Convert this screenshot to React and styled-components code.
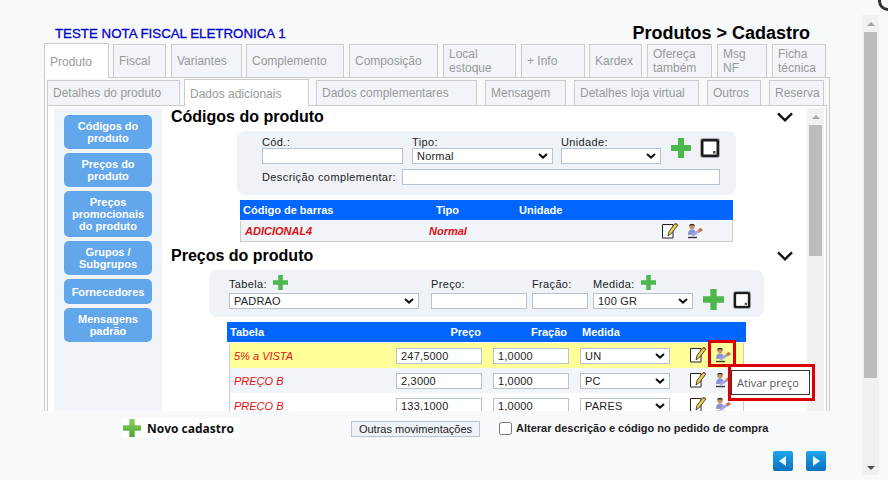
import styled, { createGlobalStyle } from "styled-components"

const GlobalStyle = createGlobalStyle`
    html, body { margin: 0; padding: 0; background: #f8f9fa; overflow: hidden; }
    body { font-family: "Liberation Sans", Arial, sans-serif; color: #000; }
    * { box-sizing: border-box; }
`

const selectArrow = encodeURIComponent(
    '<svg xmlns="http://www.w3.org/2000/svg" width="10" height="6" viewBox="0 0 10 6"><path d="M1 1l4 3.600L9 1" fill="none" stroke="#111" stroke-width="2"/></svg>'
)

const Page = styled.div`
    position: relative;
    display: flex;
    width: 888px;
    height: 480px;
    overflow: hidden;
`
const Main = styled.div`
    width: 862px;
    display: flex;
    flex-direction: column;
    padding-top: 23px;
`
const CornerRing = styled.div`
    position: absolute;
    right: -10px;
    top: -9px;
    width: 20px;
    height: 20px;
    border-radius: 50%;
    border: 3px solid #333;
    background: #fff;
`
const Header = styled.header`
    display: flex;
    justify-content: space-between;
    align-items: center;
    height: 21px;
    padding: 0 52px 0 55px;
`
const ShopName = styled.h1`
    margin: 0;
    font-size: 13.3px;
    font-weight: 400;
    color: #0000cc;
    -webkit-text-stroke: 0.3px #0000cc;
`
const PageTitle = styled.h2`
    margin: 0;
    font-size: 18px;
    font-weight: 700;
`
const TabRow = styled.nav`
    display: flex;
    align-items: flex-end;
    padding-left: ${p => p.$left}px;
    height: ${p => p.$height}px;
    position: relative;
    z-index: 1;
    margin-bottom: -1px;
`
const Tab = styled.div`
    width: ${p => p.$w}px;
    margin-left: ${p => p.$gap}px;
    height: ${p => p.$active ? p.$height + 1 : p.$height}px;
    padding: ${p => p.$active ? 2 : 0}px 2px 0 5px;
    display: flex;
    align-items: center;
    font-size: 12px;
    line-height: 14px;
    color: #999;
    background: ${p => p.$active ? "#fff" : "#f1f4f9"};
    border: 1px solid #ccc;
    border-bottom: ${p => p.$active ? "none" : "1px solid #ccc"};
    white-space: pre-line;
`
const OuterPanel = styled.div`
    margin-left: 44px;
    width: 786px;
    height: 334px;
    border: 1px solid #ccc;
    border-bottom: none;
    padding: 2px 2px 0;
    overflow: hidden;
`
const InnerPanel = styled.div`
    display: flex;
    height: 306px;
    border: 1px solid #ccc;
    border-bottom: none;
    background: #fff;
    padding: 2px 2px 0 6px;
`
const Sidebar = styled.aside`
    width: 108px;
    flex: none;
    background: #f1f4f9;
    padding: 7px 10px 0;
    display: flex;
    flex-direction: column;
    gap: 4px;
`
const SideButton = styled.div`
    min-height: 25px;
    padding: 5px 2px;
    display: flex;
    align-items: center;
    justify-content: center;
    text-align: center;
    background: #62a6ec;
    border-radius: 5px;
    color: #fff;
    font-size: 11px;
    font-weight: 700;
    line-height: 12px;
    white-space: pre-line;
`
const Content = styled.div`
    width: 645px;
    flex: none;
    overflow-x: visible;
    overflow-y: clip;
`
const SectionHead = styled.div`
    display: flex;
    justify-content: space-between;
    align-items: center;
    height: 17px;
    margin-top: ${p => p.$top}px;
    margin-bottom: 6px;
    padding: 0 14px 0 9px;
`
const SectionTitle = styled.h3`
    margin: 0;
    font-size: 16px;
    font-weight: 700;
`
const FormBox = styled.div`
    margin-left: ${p => p.$left}px;
    width: ${p => p.$w}px;
    padding: 5px 0 ${p => p.$bottom}px ${p => p.$pad}px;
    background: #eff2f7;
    border-radius: 8px;
`
const FormRow = styled.div`
    display: flex;
    align-items: flex-end;
    margin-top: ${p => p.$top || 0}px;
`
const Field = styled.label`
    display: flex;
    flex-direction: column;
    width: ${p => p.$w}px;
    margin-right: ${p => p.$gap}px;
    font-size: 11px;
    line-height: 12px;
`
const FieldLabel = styled.span`
    display: flex;
    align-items: flex-end;
    gap: 6px;
    padding-bottom: ${p => p.$raised ? 3 : 0}px;
    color: #222;
    letter-spacing: 0.35px;
`
const InlineLabel = styled.span`
    font-size: 11px;
    line-height: 16px;
    width: 140px;
    letter-spacing: 0.4px;
    color: #222;
`
const TextInput = styled.input`
    width: ${p => p.$w ? p.$w + "px" : "100%"};
    height: 16px;
    padding: 0 4px;
    border: 1px solid #b6c2ce;
    border-radius: 0;
    background: #fff;
    font: 11px "Liberation Sans", Arial, sans-serif;
    letter-spacing: 0.2px;
    color: #222;
    outline: none;
`
const Select = styled.select`
    appearance: none;
    width: 100%;
    height: 16px;
    padding: 0 16px 0 4px;
    border: 1px solid #b6c2ce;
    border-radius: 0;
    background: #fff url("data:image/svg+xml,${selectArrow}") no-repeat right 4px center;
    font: 11px "Liberation Sans", Arial, sans-serif;
    letter-spacing: 0.2px;
    color: #222;
    outline: none;
`
const ActionIcon = styled.span`
    display: flex;
    margin-right: ${p => p.$gap || 0}px;
    margin-bottom: ${p => p.$drop || 0}px;
`
const GridTable = styled.div`
    margin-left: ${p => p.$left}px;
    margin-top: 5px;
    width: ${p => p.$w}px;
`
const HeadRow = styled.div`
    display: grid;
    grid-template-columns: ${p => p.$cols};
    align-items: center;
    height: 20px;
    margin-bottom: 1px;
    background: #0066ff;
    color: #fff;
    font-size: 11px;
    font-weight: 700;
`
const HeadCell = styled.span`
    text-align: ${p => p.$right ? "right" : "left"};
`
const BodyRow = styled.div`
    display: grid;
    grid-template-columns: ${p => p.$cols};
    align-items: center;
    height: ${p => p.$h}px;
    margin: ${p => p.$inset ? "0 2px" : "0"};
    background: ${p => p.$bg};
    border-left: 1px solid #ccc;
    border-right: 1px solid #ccc;
    border-bottom: ${p => p.$inset ? "none" : "1px solid #ccc"};
`
const RedCell = styled.span`
    color: #e01010;
    font-size: 11px;
    font-style: italic;
    font-weight: ${p => p.$bold ? 700 : 400};
`
const IconCell = styled.span`
    position: relative;
    display: flex;
    width: 16px;
    height: 16px;
    margin-top: -1px;
`
const Highlight = styled.span`
    position: absolute;
    left: -7px;
    top: -7px;
    width: 28px;
    height: 27px;
    border: 3px solid #dc0000;
`
const Tooltip = styled.span`
    position: absolute;
    left: 13px;
    top: 17px;
    z-index: 5;
    width: 87px;
    height: 37px;
    padding: 3px 2px 3px 0;
    border: 3px solid #dc0000;
    background: #fff;
    display: flex;
`
const TooltipInner = styled.span`
    flex: 1;
    border: 1px solid #333;
    background: #fff;
    color: #555;
    font: 11px "Open Sans", sans-serif;
    display: flex;
    align-items: center;
    padding-left: 5px;
    white-space: nowrap;
`
const ScrollTrack = styled.div`
    flex: none;
    width: 17px;
    background: #f1f1f1;
    display: flex;
    flex-direction: column;
    align-items: center;
    margin-top: ${p => p.$top}px;
    height: ${p => p.$h}px;
`
const ScrollArrow = styled.span`
    width: 0;
    height: 0;
    margin: 7px 0 ${p => p.$after}px;
    border-left: 4px solid transparent;
    border-right: 4px solid transparent;
    border-bottom: 4px solid #a3a3a3;
    ${p => p.$down && "border-bottom: none; border-top: 4px solid #505050; margin: auto 0 5px;"}
`
const ScrollThumb = styled.span`
    width: 13px;
    height: ${p => p.$h}px;
    background: #bcbcbc;
`
const Footer = styled.footer`
    display: flex;
    align-items: center;
    height: 27px;
    padding: 7px 0 0 122px;
`
const NewButton = styled.div`
    display: flex;
    align-items: center;
    gap: 6px;
    flex: none;
    width: 118px;
    height: 20px;
    padding-left: 1px;
    margin-right: 111px;
    background: #fff;
    font: 700 12px "Open Sans", sans-serif;
    color: #111;
    white-space: nowrap;
`
const PlainButton = styled.button`
    flex: none;
    width: 129px;
    height: 16px;
    padding: 0;
    margin: 2px 19px 0 0;
    border: 1px solid #b6c2ce;
    border-radius: 0;
    background: #eff2f7;
    font: 11px "Liberation Sans", Arial, sans-serif;
    color: #222;
`
const CheckLabel = styled.label`
    display: flex;
    align-items: center;
    gap: 4px;
    font-size: 11px;
    font-weight: 700;
    color: #222;
    white-space: nowrap;
    input { width: 13px; height: 13px; margin: 0; }
`
const NavRow = styled.div`
    display: flex;
    justify-content: flex-end;
    gap: 13px;
    padding: 13px 36px 0 0;
`
const NavButton = styled.button`
    width: 20px;
    height: 20px;
    padding: 0;
    border: none;
    border-radius: 2px;
    background: linear-gradient(#1ea6ea, #0a70bc);
    display: flex;
    align-items: center;
    justify-content: center;
`

const PlusIcon = ({ size = 20, light }) => (
    <svg width={size} height={size} viewBox="0 0 20 20">
        <defs>
            <linearGradient id="plusLight" x1="0" y1="0" x2="0" y2="1">
                <stop offset="0" stopColor="#8ccf5c" />
                <stop offset="1" stopColor="#4aa838" />
            </linearGradient>
        </defs>
        <path d="M7 0h6v7h7v6h-7v7H7v-7H0V7h7z" fill={light ? "url(#plusLight)" : "#4cb84c"} />
    </svg>
)

const ClearIcon = ({ size = 20 }) => (
    <svg width={size} height={size} viewBox="0 0 20 20">
        <rect x="0" y="0" width="20" height="20" rx="3" fill="#aaa" />
        <rect x="1" y="1" width="18" height="18" rx="2" fill="#1c1c1c" />
        <rect x="3.500" y="3.500" width="13" height="13" fill="#fff" />
        <rect x="13" y="13" width="2.600" height="2.600" fill="#555" />
    </svg>
)

const EditIcon = () => (
    <svg width="16" height="16" viewBox="0 0 16 16">
        <path d="M.5 1.500h10.500v13.500H.5z" fill="#fff" stroke="#222" />
        <path d="M6 13l1-4.500 6-8 2.600 1.800-6 8z" fill="#f0d050" stroke="#222" strokeWidth=".8" />
        <path d="M13.200 1l.8-1 2 1.400-.7 1z" fill="#c03020" />
    </svg>
)

const ActivateIcon = () => (
    <svg width="16" height="16" viewBox="0 0 16 16">
        <circle cx="5" cy="3.600" r="2.800" fill="#c89468" />
        <path d="M2 2.800C2.500.4 7.500.4 8 2.800 6 2 4 2 2 2.800z" fill="#2a2a2a" />
        <path d="M1 12c0-4 1.500-5.500 4-5.500S9 8 9 12z" fill="#8f92d2" />
        <path d="M1 13.800h9v1.400H1z" fill="#333" />
        <path d="M4 11.500l10-6.500 1.800 2.300L6 13.500z" fill="#a8a4dc" />
        <path d="M11 6.600L14 5l1.800 2.300-3 1.900z" fill="#d8703c" />
    </svg>
)

const Chevron = () => (
    <svg width="16" height="10" viewBox="0 0 16 10">
        <path d="M1 1.300L8 8.300l7-7" fill="none" stroke="#111" strokeWidth="2.400" />
    </svg>
)

const NavArrow = ({ left }) => (
    <svg width="10" height="10" viewBox="0 0 10 10">
        <path d={left ? "M8 0v10L1 5z" : "M2 0v10l7-5z"} fill="#e6f6ff" />
    </svg>
)

const mainTabs = [
    { label: "Produto", w: 65, gap: 0, active: true },
    { label: "Fiscal", w: 53, gap: 4 },
    { label: "Variantes", w: 71, gap: 5 },
    { label: "Complemento", w: 98, gap: 4 },
    { label: "Composição", w: 89, gap: 5 },
    { label: "Local\nestoque", w: 73, gap: 5 },
    { label: "+ Info", w: 64, gap: 5 },
    { label: "Kardex", w: 53, gap: 4 },
    { label: "Ofereça\ntambém", w: 65, gap: 5 },
    { label: "Msg\nNF", w: 50, gap: 5 },
    { label: "Ficha\ntécnica", w: 54, gap: 5 },
]

const subTabs = [
    { label: "Detalhes do produto", w: 133, gap: 0 },
    { label: "Dados adicionais", w: 125, gap: 4, active: true },
    { label: "Dados complementares", w: 161, gap: 7 },
    { label: "Mensagem", w: 81, gap: 8 },
    { label: "Detalhes loja virtual", w: 125, gap: 8 },
    { label: "Outros", w: 54, gap: 8 },
    { label: "Reserva", w: 55, gap: 8 },
]

const sideItems = [
    "Códigos do\nproduto",
    "Preços do\nproduto",
    "Preços\npromocionais\ndo produto",
    "Grupos /\nSubgrupos",
    "Fornecedores",
    "Mensagens\npadrão",
]

const prices = [
    { name: "5% a VISTA", price: "247,5000", unit: "UN", bg: "#ffff99", active: true },
    { name: "PREÇO B", price: "2,3000", unit: "PC", bg: "#f1f4f9" },
    { name: "PREÇO B", price: "133,1000", unit: "PARES", bg: "#fff" },
]

const codeCols = "4px 184px 90px 143px 16px 9px 16px"
const priceCols = "4px 162px 86px 11px 76px 11px 90px 20px 16px 9px 16px"

export default function App() {
    return (
        <Page>
            <GlobalStyle />
            <CornerRing />
            <Main>
                <Header>
                    <ShopName>TESTE NOTA FISCAL ELETRONICA 1</ShopName>
                    <PageTitle>Produtos &gt; Cadastro</PageTitle>
                </Header>
                <TabRow $left={44} $height={34}>
                    {mainTabs.map(t => (
                        <Tab key={t.label} $w={t.w} $gap={t.gap} $height={34} $active={t.active}>{t.label}</Tab>
                    ))}
                </TabRow>
                <OuterPanel>
                    <TabRow $left={0} $height={26}>
                        {subTabs.map(t => (
                            <Tab key={t.label} $w={t.w} $gap={t.gap} $height={26} $active={t.active}>{t.label}</Tab>
                        ))}
                    </TabRow>
                    <InnerPanel>
                        <Sidebar>
                            {sideItems.map(s => <SideButton key={s}>{s}</SideButton>)}
                        </Sidebar>
                        <Content>
                            <SectionHead $top={0}>
                                <SectionTitle>Códigos do produto</SectionTitle>
                                <Chevron />
                            </SectionHead>
                            <FormBox $left={75} $w={499} $pad={25} $bottom={10}>
                                <FormRow>
                                    <Field $w={141} $gap={9}>
                                        <FieldLabel>Cód.:</FieldLabel>
                                        <TextInput />
                                    </Field>
                                    <Field $w={141} $gap={8}>
                                        <FieldLabel>Tipo:</FieldLabel>
                                        <Select defaultValue="Normal"><option>Normal</option></Select>
                                    </Field>
                                    <Field $w={100} $gap={10}>
                                        <FieldLabel>Unidade:</FieldLabel>
                                        <Select><option></option></Select>
                                    </Field>
                                    <ActionIcon $gap={9} $drop={6}><PlusIcon /></ActionIcon>
                                    <ActionIcon $drop={6}><ClearIcon /></ActionIcon>
                                </FormRow>
                                <FormRow $top={5}>
                                    <InlineLabel>Descrição complementar:</InlineLabel>
                                    <TextInput $w={318} />
                                </FormRow>
                            </FormBox>
                            <GridTable $left={78} $w={493}>
                                <HeadRow $cols="3px 193px 83px 1fr">
                                    <span />
                                    <HeadCell>Código de barras</HeadCell>
                                    <HeadCell>Tipo</HeadCell>
                                    <HeadCell>Unidade</HeadCell>
                                </HeadRow>
                                <BodyRow $cols={codeCols} $h={21} $bg="#f1f4f9">
                                    <span />
                                    <RedCell $bold>ADICIONAL4</RedCell>
                                    <RedCell $bold>Normal</RedCell>
                                    <span />
                                    <IconCell><EditIcon /></IconCell>
                                    <span />
                                    <IconCell><ActivateIcon /></IconCell>
                                </BodyRow>
                            </GridTable>
                            <SectionHead $top={5}>
                                <SectionTitle>Preços do produto</SectionTitle>
                                <Chevron />
                            </SectionHead>
                            <FormBox $left={47} $w={555} $pad={20} $bottom={8}>
                                <FormRow>
                                    <Field $w={190} $gap={12}>
                                        <FieldLabel $raised>Tabela: <PlusIcon size={15} /></FieldLabel>
                                        <Select defaultValue="PADRAO"><option>PADRAO</option></Select>
                                    </Field>
                                    <Field $w={96} $gap={5}>
                                        <FieldLabel $raised>Preço:</FieldLabel>
                                        <TextInput />
                                    </Field>
                                    <Field $w={56} $gap={5}>
                                        <FieldLabel $raised>Fração:</FieldLabel>
                                        <TextInput />
                                    </Field>
                                    <Field $w={100} $gap={10}>
                                        <FieldLabel $raised>Medida: <PlusIcon size={15} /></FieldLabel>
                                        <Select defaultValue="100 GR"><option>100 GR</option></Select>
                                    </Field>
                                    <ActionIcon $gap={9} $drop={-1}><PlusIcon size={21} /></ActionIcon>
                                    <ActionIcon><ClearIcon size={18} /></ActionIcon>
                                </FormRow>
                            </FormBox>
                            <GridTable $left={65} $w={519}>
                                <HeadRow $cols="3px 200px 51px 86px 15px 1fr">
                                    <span />
                                    <HeadCell>Tabela</HeadCell>
                                    <HeadCell $right>Preço</HeadCell>
                                    <HeadCell $right>Fração</HeadCell>
                                    <span />
                                    <HeadCell>Medida</HeadCell>
                                </HeadRow>
                                {prices.map((p, i) => (
                                    <BodyRow key={i} $inset $cols={priceCols} $h={25} $bg={p.bg}>
                                        <span />
                                        <RedCell>{p.name}</RedCell>
                                        <TextInput defaultValue={p.price} />
                                        <span />
                                        <TextInput defaultValue="1,0000" />
                                        <span />
                                        <Select defaultValue={p.unit}><option>{p.unit}</option></Select>
                                        <span />
                                        <IconCell><EditIcon /></IconCell>
                                        <span />
                                        <IconCell>
                                            <ActivateIcon />
                                            {p.active && <Highlight />}
                                            {p.active && (
                                                <Tooltip><TooltipInner>Ativar preço</TooltipInner></Tooltip>
                                            )}
                                        </IconCell>
                                    </BodyRow>
                                ))}
                            </GridTable>
                        </Content>
                        <ScrollTrack $top={0} $h={304}>
                            <ScrollArrow $after={6} />
                            <ScrollThumb $h={131} />
                        </ScrollTrack>
                    </InnerPanel>
                </OuterPanel>
                <Footer>
                    <NewButton><PlusIcon size={18} light />Novo cadastro</NewButton>
                    <PlainButton>Outras movimentações</PlainButton>
                    <CheckLabel><input type="checkbox" />Alterar descrição e código no pedido de compra</CheckLabel>
                </Footer>
                <NavRow>
                    <NavButton aria-label="Anterior"><NavArrow left /></NavButton>
                    <NavButton aria-label="Próximo"><NavArrow /></NavButton>
                </NavRow>
            </Main>
            <ScrollTrack $top={15} $h={460}>
                <ScrollArrow $after={6} />
                <ScrollThumb $h={346} />
                <ScrollArrow $down />
            </ScrollTrack>
        </Page>
    )
}
